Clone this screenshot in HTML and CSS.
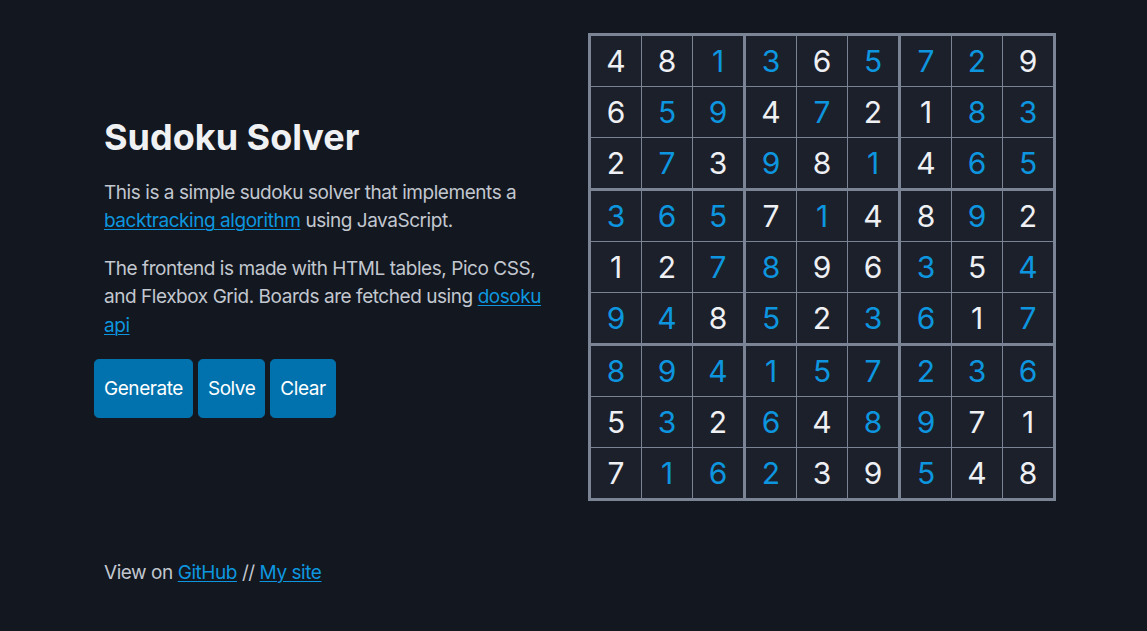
FILE: index.html
```html
<!DOCTYPE html>
<html lang="en">
<head>
<meta charset="utf-8">
<title>Sudoku Solver</title>
<link rel="stylesheet" href="styles.css">
</head>
<body>
<main class="page">
  <div class="row">
    <section class="intro">
      <h1 class="title">Sudoku Solver</h1>
      <p class="text">This is a simple sudoku solver that implements a <a href="#">backtracking algorithm</a> using JavaScript.</p>
      <p class="text">The frontend is made with HTML tables, Pico CSS, and Flexbox Grid. Boards are fetched using <a href="#">dosoku api</a></p>
      <div class="buttons">
        <button class="btn">Generate</button>
        <button class="btn">Solve</button>
        <button class="btn">Clear</button>
      </div>
    </section>
    <section class="board-wrap">
      <table class="board">
        <tbody>
          <tr><td>4</td><td>8</td><td class="s">1</td><td class="s">3</td><td>6</td><td class="s">5</td><td class="s">7</td><td class="s">2</td><td>9</td></tr>
          <tr><td>6</td><td class="s">5</td><td class="s">9</td><td>4</td><td class="s">7</td><td>2</td><td>1</td><td class="s">8</td><td class="s">3</td></tr>
          <tr><td>2</td><td class="s">7</td><td>3</td><td class="s">9</td><td>8</td><td class="s">1</td><td>4</td><td class="s">6</td><td class="s">5</td></tr>
          <tr><td class="s">3</td><td class="s">6</td><td class="s">5</td><td>7</td><td class="s">1</td><td>4</td><td>8</td><td class="s">9</td><td>2</td></tr>
          <tr><td>1</td><td>2</td><td class="s">7</td><td class="s">8</td><td>9</td><td>6</td><td class="s">3</td><td>5</td><td class="s">4</td></tr>
          <tr><td class="s">9</td><td class="s">4</td><td>8</td><td class="s">5</td><td>2</td><td class="s">3</td><td class="s">6</td><td>1</td><td class="s">7</td></tr>
          <tr><td class="s">8</td><td class="s">9</td><td class="s">4</td><td class="s">1</td><td class="s">5</td><td class="s">7</td><td class="s">2</td><td class="s">3</td><td class="s">6</td></tr>
          <tr><td>5</td><td class="s">3</td><td>2</td><td class="s">6</td><td>4</td><td class="s">8</td><td class="s">9</td><td>7</td><td>1</td></tr>
          <tr><td>7</td><td class="s">1</td><td class="s">6</td><td class="s">2</td><td>3</td><td>9</td><td class="s">5</td><td>4</td><td>8</td></tr>
        </tbody>
      </table>
    </section>
  </div>
  <footer class="footer">
    View on <a href="#">GitHub</a> // <a href="#">My site</a>
  </footer>
</main>
</body>
</html>
```

FILE: styles.css
```css
* { box-sizing: border-box; }

html, body {
  margin: 0;
  padding: 0;
  background: #13171f;
}

body {
  font-family: Inter, "Noto Sans", sans-serif;
  font-size: 19px;
  line-height: 28.5px;
  letter-spacing: -0.45px;
  color: #c2c7d0;
}

a {
  color: #0d96df;
  text-decoration: underline;
  text-underline-offset: 0.125em;
  text-decoration-thickness: 1px;
}

.page {
  padding: 33px 0 0 104px;
}

.row {
  display: flex;
  align-items: center;
}

.intro {
  width: 484px;
  padding-right: 20px;
}

.title {
  margin: 0 0 20px;
  font-size: 36px;
  line-height: 43px;
  font-weight: 700;
  letter-spacing: 0;
  color: #f0f1f3;
}

.text {
  margin: 0 0 19px;
}

.buttons {
  display: flex;
  gap: 5px;
  margin-left: -10px;
}

.btn {
  font-family: inherit;
  font-size: 19px;
  line-height: 28.5px;
  letter-spacing: -0.45px;
  padding: 14.25px 9px;
  border: 1px solid #0172ad;
  border-radius: 4.75px;
  background: #0172ad;
  color: #ffffff;
  cursor: pointer;
}

.board-wrap {
  flex: none;
}

.board {
  border-collapse: separate;
  border-spacing: 0;
  border: 3px solid #7b8495;
  table-layout: fixed;
}

.board td {
  box-sizing: content-box;
  width: 50px;
  height: 50px;
  padding: 0;
  background: #1c202b;
  border-right: 1px solid #7b8495;
  border-bottom: 1px solid #7b8495;
  text-align: center;
  vertical-align: middle;
  font-size: 30px;
  line-height: 1;
  letter-spacing: 0;
  color: #eef0f3;
}

.board td:nth-child(3),
.board td:nth-child(6) { border-right-width: 3px; }
.board td:nth-child(9) { border-right: 0; }
.board tr:nth-child(3) td,
.board tr:nth-child(6) td { border-bottom-width: 3px; }
.board tr:nth-child(9) td { border-bottom: 0; }

.board td.s { color: #0d96df; }

.footer {
  margin-top: 58px;
}
```
